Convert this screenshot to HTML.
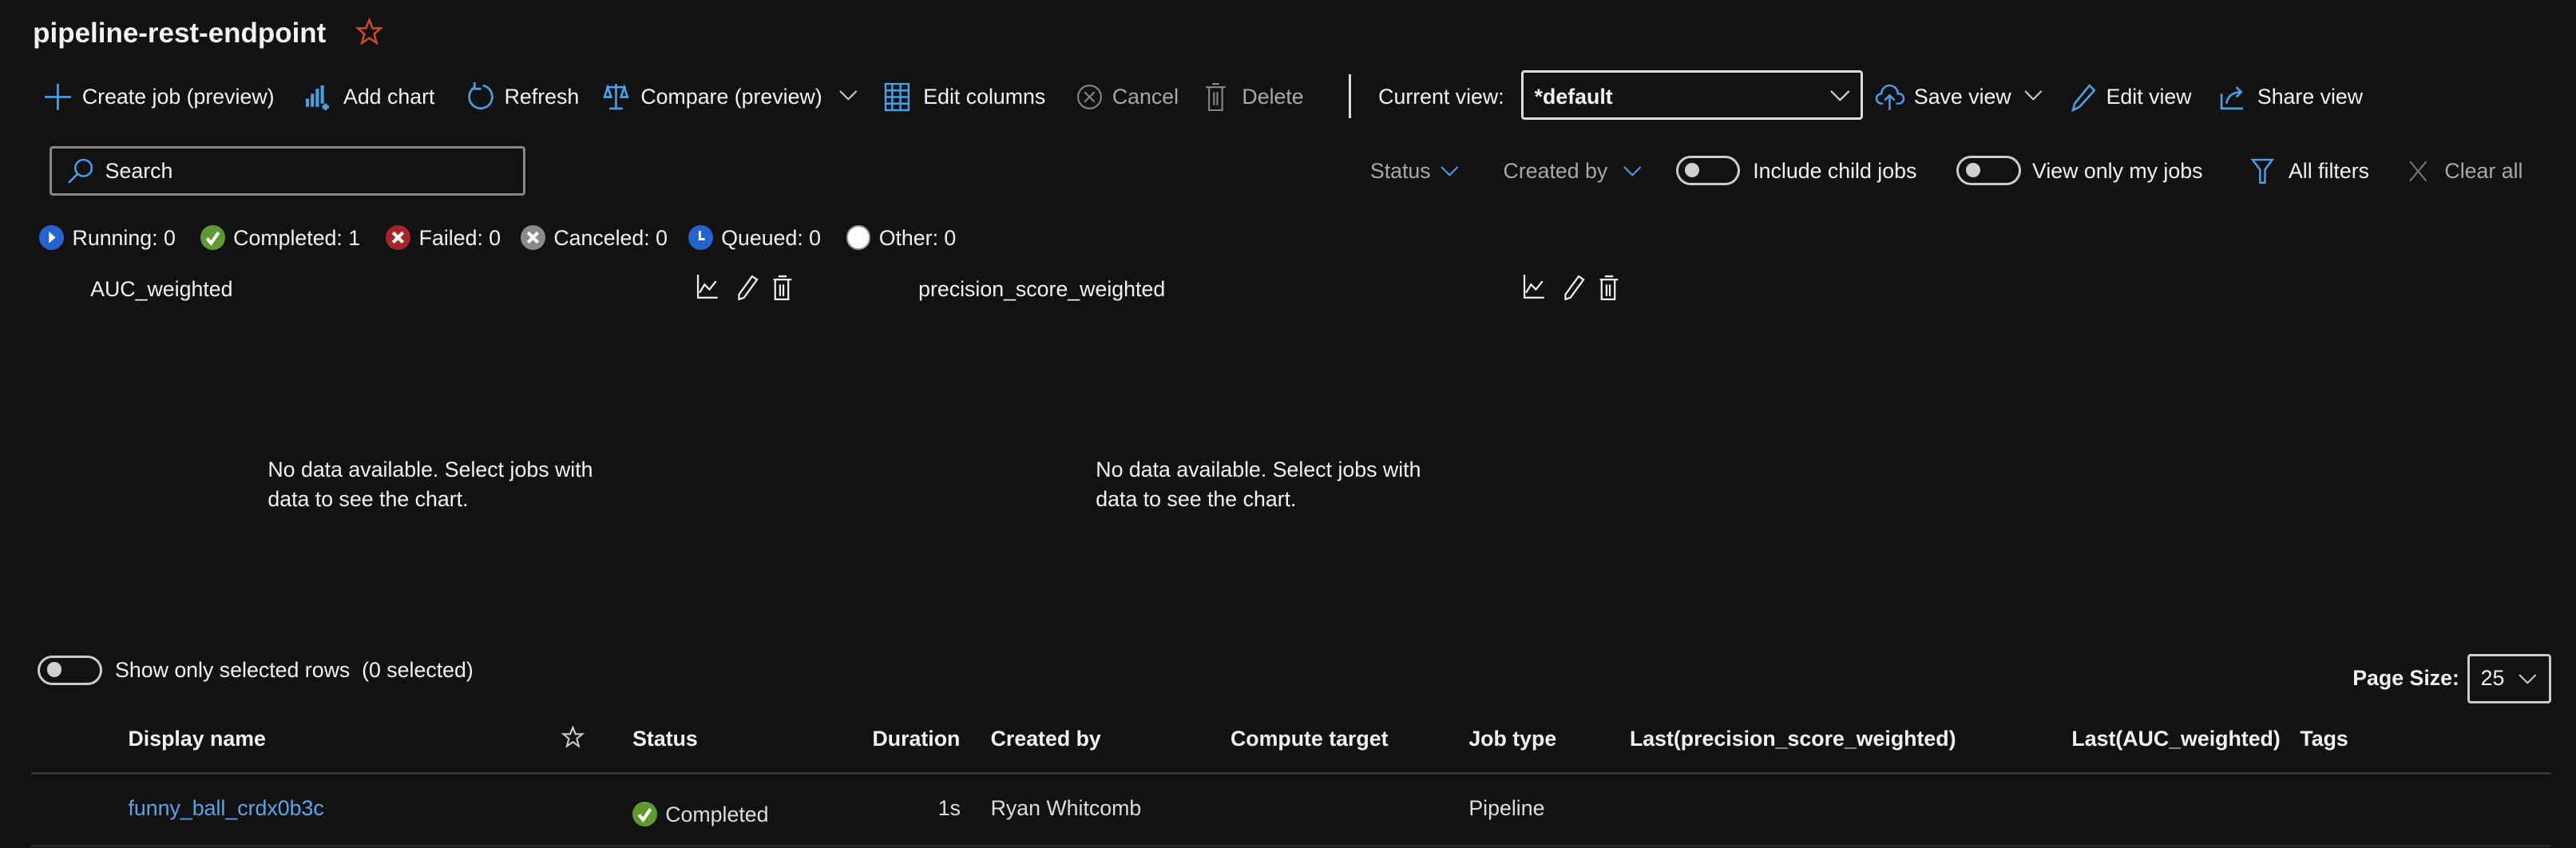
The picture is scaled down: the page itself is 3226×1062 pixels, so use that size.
<!DOCTYPE html>
<html><head><meta charset="utf-8"><style>
html,body{margin:0;padding:0;background:#121212;overflow:hidden}
body{width:3226px;height:1062px}
#r{zoom:2.0574;position:relative;width:1568px;height:516px;font-family:"Liberation Sans",sans-serif;color:#f2f2f2;font-size:13px}
.t{position:absolute;white-space:nowrap;line-height:14px}
.g{color:#a8a8a8}
.b{font-weight:bold}
svg{position:absolute;overflow:visible}
.tg{position:absolute;width:36px;height:16px;border:1.5px solid #ccc;border-radius:10px;box-sizing:border-box}
.tg:after{content:"";position:absolute;left:4px;top:2.5px;width:9px;height:9px;border-radius:50%;background:#d0d0d0}
.sc{position:absolute;width:15px;height:15px;border-radius:50%}
</style></head><body><div id="r">
<div class="t b" style="left:20px;top:10px;font-size:17px;line-height:20px">pipeline-rest-endpoint</div>
<svg style="left:217px;top:11px" width="16" height="16" viewBox="0 0 16 16"><path d="M8 1l2 5h5l-4 3.5 1.5 5.5L8 12l-4.5 3L5 9.5 1 6h5z" fill="none" stroke="#d24a2a" stroke-width="1.2"/></svg>

<svg style="left:27px;top:51px" width="16" height="16"><path d="M8 0v16M0 8h16" stroke="#4aa0e6" stroke-width="1.3"/></svg>
<div class="t" style="left:50px;top:52px">Create job (preview)</div>
<svg style="left:186px;top:51px" width="16" height="16"><path d="M1 9v5M4 6v8M7 3v11M10 1v11M12 12v4M10 14h4" stroke="#4aa0e6" stroke-width="2"/></svg>
<div class="t" style="left:209px;top:52px">Add chart</div>
<svg style="left:284px;top:50px" width="16" height="18"><path d="M10 2a7 7 0 1 1-5 1M5 0v4h4" fill="none" stroke="#4aa0e6" stroke-width="1.3"/></svg>
<div class="t" style="left:307px;top:52px">Refresh</div>
<svg style="left:367px;top:50px" width="16" height="18"><path d="M8 1v15M2 3h12M4 16h8M3 3l-2 6h4zM13 3l-2 6h4z" fill="none" stroke="#4aa0e6" stroke-width="1.3"/></svg>
<div class="t" style="left:390px;top:52px">Compare (preview)</div>
<svg style="left:511px;top:55px" width="11" height="7"><path d="M0.5 0.5l5 5 5-5" fill="none" stroke="#ccc"/></svg>
<svg style="left:538px;top:50px" width="16" height="18"><path d="M1 1h14v16H1zM1 5h14M1 9h14M1 13h14M5 1v16M10 1v16" fill="none" stroke="#4aa0e6" stroke-width="1.2"/></svg>
<div class="t" style="left:562px;top:52px">Edit columns</div>
<svg style="left:655px;top:51px" width="16" height="16"><circle cx="8" cy="8" r="7" fill="none" stroke="#888"/><path d="M5 5l6 6M11 5l-6 6" stroke="#888"/></svg>
<div class="t g" style="left:677px;top:52px">Cancel</div>
<svg style="left:733px;top:50px" width="14" height="18"><path d="M1 3h12M5 1h4M3 3v14h8V3M6 6v8M8 6v8" fill="none" stroke="#888"/></svg>
<div class="t g" style="left:756px;top:52px">Delete</div>
<div style="position:absolute;left:821px;top:45px;width:1.5px;height:27px;background:#ddd"></div>
<div class="t" style="left:839px;top:52px">Current view:</div>
<div style="position:absolute;left:926px;top:43px;width:208px;height:30px;border:1.5px solid #ddd;border-radius:2px;box-sizing:border-box"></div>
<div class="t b" style="left:934px;top:52px">*default</div>
<svg style="left:1114px;top:55px" width="12" height="7"><path d="M0.5 0.5l5.5 5.5 5.5-5.5" fill="none" stroke="#ddd"/></svg>
<svg style="left:1142px;top:51px" width="17" height="16"><path d="M4 12H3a3 3 0 0 1 0-6 5 5 0 0 1 10 0 3 3 0 0 1 1 6h-2M8 16V8M5 10l3-3 3 3" fill="none" stroke="#4aa0e6" stroke-width="1.2"/></svg>
<div class="t" style="left:1165px;top:52px">Save view</div>
<svg style="left:1232px;top:55px" width="11" height="7"><path d="M0.5 0.5l5 5 5-5" fill="none" stroke="#ccc"/></svg>
<svg style="left:1260px;top:51px" width="16" height="17"><path d="M12 1l3 3-9 10-4 2 1-4z" fill="none" stroke="#4aa0e6" stroke-width="1.3"/></svg>
<div class="t" style="left:1282px;top:52px">Edit view</div>
<svg style="left:1351px;top:51px" width="16" height="16"><path d="M1 6v9h13M4 12c1-5 4-7 9-7M10 2l3 3-3 3" fill="none" stroke="#4aa0e6" stroke-width="1.3"/></svg>
<div class="t" style="left:1374px;top:52px">Share view</div>

<div style="position:absolute;left:30px;top:89px;width:290px;height:30px;border:1.5px solid #888;border-radius:2px;box-sizing:border-box"></div>
<svg style="left:41px;top:96px" width="16" height="16"><circle cx="10" cy="6" r="5" fill="none" stroke="#4aa0e6" stroke-width="1.2"/><path d="M6.5 9.5L1 15" stroke="#4aa0e6" stroke-width="1.2"/></svg>
<div class="t" style="left:64px;top:97px">Search</div>

<div class="t g" style="left:834px;top:97px">Status</div>
<svg style="left:877px;top:101px" width="11" height="6"><path d="M0.5 0.5l5 5 5-5" fill="none" stroke="#4aa0e6"/></svg>
<div class="t g" style="left:915px;top:97px">Created by</div>
<svg style="left:988px;top:101px" width="11" height="6"><path d="M0.5 0.5l5 5 5-5" fill="none" stroke="#4aa0e6"/></svg>
<div class="tg" style="left:1020px;top:95px;width:39px;height:18px"></div>
<div class="t" style="left:1067px;top:97px">Include child jobs</div>
<div class="tg" style="left:1191px;top:95px;width:39px;height:18px"></div>
<div class="t" style="left:1237px;top:97px">View only my jobs</div>
<svg style="left:1370px;top:96px" width="14" height="16"><path d="M1 1h12L8.5 7v8h-3V7z" fill="none" stroke="#4aa0e6" stroke-width="1.2"/></svg>
<div class="t" style="left:1393px;top:97px">All filters</div>
<svg style="left:1466px;top:97px" width="12" height="14"><path d="M1 1l10 12M11 1L1 13" stroke="#777"/></svg>
<div class="t g" style="left:1488px;top:97px">Clear all</div>

<div class="sc" style="left:24px;top:137px;background:#2564cf"></div><svg style="left:24px;top:137px" width="15" height="15"><path d="M6 4l4 3.5L6 11z" fill="#fff"/></svg>
<div class="t" style="left:44px;top:138px">Running: 0</div>
<div class="sc" style="left:122px;top:137px;background:#5e9a32"></div><svg style="left:122px;top:137px" width="15" height="15"><path d="M4 8l2.5 3L11 4.5" fill="none" stroke="#fff" stroke-width="2"/></svg>
<div class="t" style="left:142px;top:138px">Completed: 1</div>
<div class="sc" style="left:235px;top:137px;background:#a4262c"></div><svg style="left:235px;top:137px" width="15" height="15"><path d="M4.5 4.5l6 6M10.5 4.5l-6 6" stroke="#fff" stroke-width="2"/></svg>
<div class="t" style="left:255px;top:138px">Failed: 0</div>
<div class="sc" style="left:317px;top:137px;background:#8a8a8a"></div><svg style="left:317px;top:137px" width="15" height="15"><path d="M4.5 4.5l6 6M10.5 4.5l-6 6" stroke="#fff" stroke-width="2"/></svg>
<div class="t" style="left:337px;top:138px">Canceled: 0</div>
<div class="sc" style="left:419px;top:137px;background:#2564cf"></div><svg style="left:419px;top:137px" width="15" height="15"><path d="M7 3.5v5h3" fill="none" stroke="#fff" stroke-width="1.5"/></svg>
<div class="t" style="left:439px;top:138px">Queued: 0</div>
<div class="sc" style="left:515px;top:137px;background:#fff;border:1px solid #999;box-sizing:border-box"></div>
<div class="t" style="left:535px;top:138px">Other: 0</div>

<div class="t" style="left:55px;top:169px">AUC_weighted</div>
<div class="t" style="left:559px;top:169px">precision_score_weighted</div>
<svg style="left:424px;top:167px" width="60" height="16"><path d="M1 0v14h12M2 11l3-5 3 3 4-5" fill="none" stroke="#eee" stroke-width="1.1"/><path d="M34 1l3 2-8 11-3 1 0-3z" fill="none" stroke="#eee" stroke-width="1.1"/><path d="M47 3h11M50 1h5M48 3v12h8V3M51 6v7M53 6v7" fill="none" stroke="#eee" stroke-width="1.1"/></svg>
<svg style="left:927px;top:167px" width="60" height="16"><path d="M1 0v14h12M2 11l3-5 3 3 4-5" fill="none" stroke="#eee" stroke-width="1.1"/><path d="M34 1l3 2-8 11-3 1 0-3z" fill="none" stroke="#eee" stroke-width="1.1"/><path d="M47 3h11M50 1h5M48 3v12h8V3M51 6v7M53 6v7" fill="none" stroke="#eee" stroke-width="1.1"/></svg>
<div class="t" style="left:163px;top:277px;line-height:18px">No data available. Select jobs with<br>data to see the chart.</div>
<div class="t" style="left:667px;top:277px;line-height:18px">No data available. Select jobs with<br>data to see the chart.</div>

<div class="tg" style="left:23px;top:399px;width:39px;height:18px"></div>
<div class="t" style="left:70px;top:401px">Show only selected rows&nbsp; (0 selected)</div>
<div class="t b" style="left:1432px;top:406px">Page Size:</div>
<div style="position:absolute;left:1502px;top:398px;width:51px;height:30px;border:1.5px solid #ccc;border-radius:2px;box-sizing:border-box"></div>
<div class="t" style="left:1510px;top:406px">25</div>
<svg style="left:1533px;top:410px" width="11" height="6"><path d="M0.5 0.5l5 5 5-5" fill="none" stroke="#ccc"/></svg>

<div class="t b" style="left:78px;top:443px">Display name</div>
<svg style="left:342px;top:442px" width="13" height="14"><path d="M6.5 1l1.6 4h4.2l-3.4 2.8 1.2 4.6-3.6-2.6-3.6 2.6 1.2-4.6L0.7 5h4.2z" fill="none" stroke="#ccc"/></svg>
<div class="t b" style="left:385px;top:443px">Status</div>
<div class="t b" style="left:531px;top:443px">Duration</div>
<div class="t b" style="left:603px;top:443px">Created by</div>
<div class="t b" style="left:749px;top:443px">Compute target</div>
<div class="t b" style="left:894px;top:443px">Job type</div>
<div class="t b" style="left:992px;top:443px">Last(precision_score_weighted)</div>
<div class="t b" style="left:1261px;top:443px">Last(AUC_weighted)</div>
<div class="t b" style="left:1400px;top:443px">Tags</div>
<div style="position:absolute;left:19px;top:470px;width:1534px;height:1.5px;background:#333"></div>
<div class="t" style="left:78px;top:485px;color:#5aa6ec">funny_ball_crdx0b3c</div>
<div class="sc" style="left:385px;top:488px;background:#5e9a32"></div><svg style="left:385px;top:488px" width="15" height="15"><path d="M4 8l2.5 3L11 4.5" fill="none" stroke="#fff" stroke-width="2"/></svg>
<div class="t" style="left:405px;top:489px;color:#ddd">Completed</div>
<div class="t" style="left:571px;top:485px;color:#ddd">1s</div>
<div class="t" style="left:603px;top:485px;color:#ddd">Ryan Whitcomb</div>
<div class="t" style="left:894px;top:485px;color:#ddd">Pipeline</div>
<div style="position:absolute;left:19px;top:514px;width:1534px;height:1.5px;background:#2a2a2a"></div>
</div></body></html>
